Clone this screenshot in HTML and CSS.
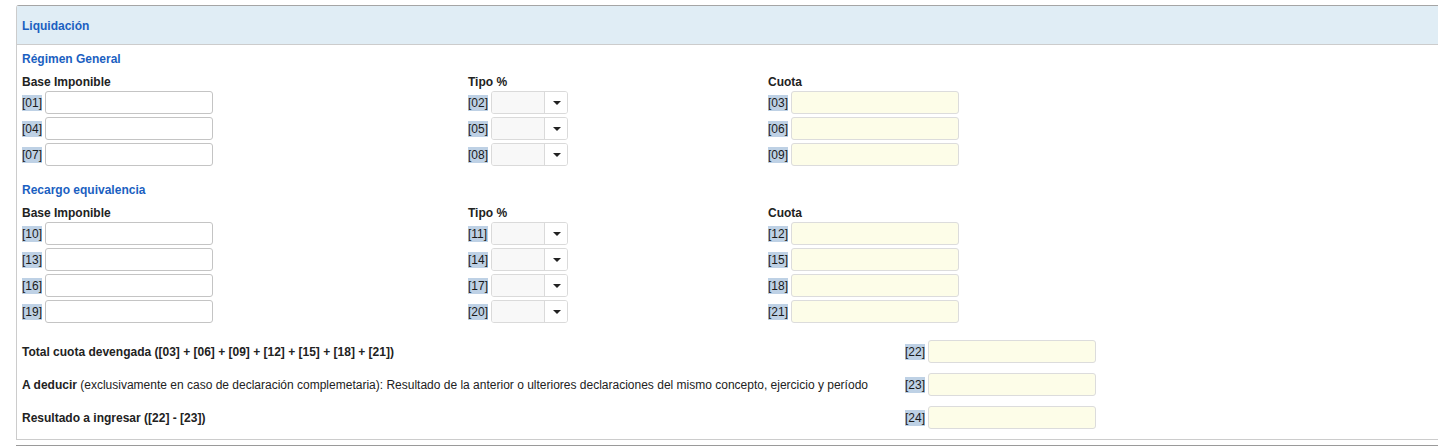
FILE: index.html
```html
<!DOCTYPE html>
<html lang="es">
<head>
  <meta charset="UTF-8">
  <title>Liquidación</title>
  <link rel="stylesheet" href="styles.css">
</head>
<body>
  <div class="page">
    <div class="panel">
      <div class="panel-heading">Liquidación</div>
      <div class="panel-body">

        <div class="section">
          <h4 class="section-title">Régimen General</h4>
          <div class="grid">
            <div class="col">
              <div class="col-title">Base Imponible</div>
              <div class="field"><span class="tag">[01]</span><input class="input" type="text"></div>
              <div class="field"><span class="tag">[04]</span><input class="input" type="text"></div>
              <div class="field"><span class="tag">[07]</span><input class="input" type="text"></div>
            </div>
            <div class="col">
              <div class="col-title">Tipo %</div>
              <div class="field"><span class="tag">[02]</span><div class="combo"><span class="combo-value"></span><span class="combo-btn"><span class="caret"></span></span></div></div>
              <div class="field"><span class="tag">[05]</span><div class="combo"><span class="combo-value"></span><span class="combo-btn"><span class="caret"></span></span></div></div>
              <div class="field"><span class="tag">[08]</span><div class="combo"><span class="combo-value"></span><span class="combo-btn"><span class="caret"></span></span></div></div>
            </div>
            <div class="col">
              <div class="col-title">Cuota</div>
              <div class="field"><span class="tag">[03]</span><input class="input calc" type="text" readonly></div>
              <div class="field"><span class="tag">[06]</span><input class="input calc" type="text" readonly></div>
              <div class="field"><span class="tag">[09]</span><input class="input calc" type="text" readonly></div>
            </div>
          </div>
        </div>

        <div class="section">
          <h4 class="section-title">Recargo equivalencia</h4>
          <div class="grid">
            <div class="col">
              <div class="col-title">Base Imponible</div>
              <div class="field"><span class="tag">[10]</span><input class="input" type="text"></div>
              <div class="field"><span class="tag">[13]</span><input class="input" type="text"></div>
              <div class="field"><span class="tag">[16]</span><input class="input" type="text"></div>
              <div class="field"><span class="tag">[19]</span><input class="input" type="text"></div>
            </div>
            <div class="col">
              <div class="col-title">Tipo %</div>
              <div class="field"><span class="tag">[11]</span><div class="combo"><span class="combo-value"></span><span class="combo-btn"><span class="caret"></span></span></div></div>
              <div class="field"><span class="tag">[14]</span><div class="combo"><span class="combo-value"></span><span class="combo-btn"><span class="caret"></span></span></div></div>
              <div class="field"><span class="tag">[17]</span><div class="combo"><span class="combo-value"></span><span class="combo-btn"><span class="caret"></span></span></div></div>
              <div class="field"><span class="tag">[20]</span><div class="combo"><span class="combo-value"></span><span class="combo-btn"><span class="caret"></span></span></div></div>
            </div>
            <div class="col">
              <div class="col-title">Cuota</div>
              <div class="field"><span class="tag">[12]</span><input class="input calc" type="text" readonly></div>
              <div class="field"><span class="tag">[15]</span><input class="input calc" type="text" readonly></div>
              <div class="field"><span class="tag">[18]</span><input class="input calc" type="text" readonly></div>
              <div class="field"><span class="tag">[21]</span><input class="input calc" type="text" readonly></div>
            </div>
          </div>
        </div>

        <div class="totals">
          <div class="total-row">
            <div class="total-label"><b>Total cuota devengada ([03] + [06] + [09] + [12] + [15] + [18] + [21])</b></div>
            <div class="field"><span class="tag">[22]</span><input class="input calc" type="text" readonly></div>
          </div>
          <div class="total-row">
            <div class="total-label"><b>A deducir</b> (exclusivamente en caso de declaración complemetaria): Resultado de la anterior o ulteriores declaraciones del mismo concepto, ejercicio y período</div>
            <div class="field"><span class="tag">[23]</span><input class="input calc" type="text"></div>
          </div>
          <div class="total-row">
            <div class="total-label"><b>Resultado a ingresar ([22] - [23])</b></div>
            <div class="field"><span class="tag">[24]</span><input class="input calc" type="text" readonly></div>
          </div>
        </div>

      </div>
    </div>
    <div class="next-panel"></div>
  </div>
</body>
</html>
```

FILE: styles.css
```css
:root {
  --title-color: #1b5fc1;
  --text-color: #222222;
  --heading-bg: #e0edf5;
  --border-color: #cccccc;
  --tag-bg: #bed1e5;
  --calc-bg: #fdfde8;
}

* {
  box-sizing: border-box;
}

body {
  margin: 0;
  font-family: "Liberation Sans", Arial, sans-serif;
  font-size: 12px;
  color: var(--text-color);
  background: #ffffff;
  overflow: hidden;
}

.page {
  padding: 5px 0 0 16px;
}

.panel {
  margin-right: -10px;
  border: 1px solid var(--border-color);
  border-top-color: #a5a5a5;
  border-top-left-radius: 3px;
}

.panel-heading {
  height: 39px;
  padding: 0 5px;
  line-height: 40px;
  overflow: hidden;
  font-weight: bold;
  color: var(--title-color);
  background-color: var(--heading-bg);
  border-bottom: 1px solid var(--border-color);
}

.panel-body {
  padding: 0 0 10px 5px;
}

.section {
  padding-top: 5px;
  margin-bottom: 10px;
}

.section-title {
  margin: 0 0 6px;
  padding-top: 1px;
  font-size: 12px;
  line-height: 16px;
  color: var(--title-color);
}

.grid {
  display: grid;
  grid-template-columns: 446px 300px 1fr;
}

.col-title {
  font-weight: bold;
  padding-top: 1px;
  line-height: 16px;
  margin-bottom: 1px;
}

.field {
  display: flex;
  align-items: center;
  gap: 3px;
  height: 23px;
  margin-bottom: 3px;
}

.col .field:last-child {
  margin-bottom: 0;
}

.tag {
  display: inline-block;
  width: 20px;
  line-height: 16px;
  background-color: var(--tag-bg);
  color: #1a1a1a;
}

.input {
  width: 168px;
  height: 23px;
  padding: 2px 5px;
  font: inherit;
  border: 1px solid #c4c4c4;
  border-radius: 3px;
  background: #ffffff;
  outline: none;
}

.input.calc {
  background-color: var(--calc-bg);
  border-color: #dcdcdc;
}

.combo {
  display: flex;
  width: 77px;
  height: 23px;
  border: 1px solid #dadada;
  border-radius: 3px;
  overflow: hidden;
}

.combo-value {
  flex: 1;
  background-color: #f8f8f8;
}

.combo-btn {
  width: 23px;
  display: flex;
  align-items: center;
  justify-content: center;
  border-left: 1px solid #dadada;
  background: #ffffff;
}

.caret {
  width: 0;
  height: 0;
  margin-left: 1px;
  border-left: 4px solid transparent;
  border-right: 4px solid transparent;
  border-top: 4px solid #222222;
}

.totals {
  padding-top: 7px;
}

.total-row {
  display: flex;
  align-items: center;
  margin-bottom: 10px;
}

.total-row:last-child {
  margin-bottom: 0;
}

.total-row .field {
  margin-bottom: 0;
}

.total-label {
  width: 883px;
}

.next-panel {
  margin-top: 5px;
  margin-right: -10px;
  border-top: 1px solid #9a9a9a;
}
```
